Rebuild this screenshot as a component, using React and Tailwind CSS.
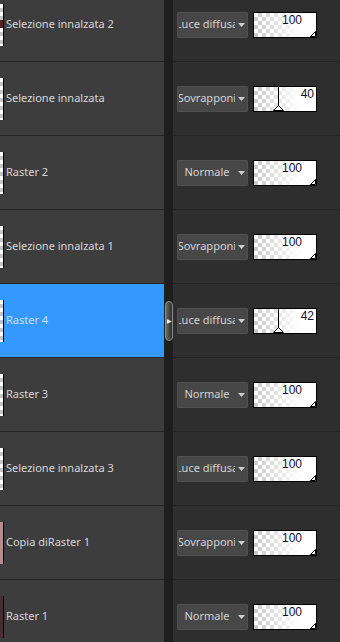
import React from 'react';

const layers = [
    { name: 'Selezione innalzata 2', mode: 'Luce diffusa', opacity: 100, thumb: 'bg-white', mark: 'bg-[#5a1f22]' },
    { name: 'Selezione innalzata', mode: 'Sovrapponi', opacity: 40, thumb: 'bg-white', mark: '' },
    { name: 'Raster 2', mode: 'Normale', opacity: 100, thumb: 'bg-white', mark: '' },
    { name: 'Selezione innalzata 1', mode: 'Sovrapponi', opacity: 100, thumb: 'bg-white', mark: '' },
    { name: 'Raster 4', mode: 'Luce diffusa', opacity: 42, thumb: 'bg-white', mark: '', selected: true },
    { name: 'Raster 3', mode: 'Normale', opacity: 100, thumb: 'bg-white', mark: '' },
    { name: 'Selezione innalzata 3', mode: 'Luce diffusa', opacity: 100, thumb: 'bg-white', mark: '' },
    { name: 'Copia diRaster 1', mode: 'Sovrapponi', opacity: 100, thumb: 'bg-[#b98a92]', mark: '' },
    { name: 'Raster 1', mode: 'Normale', opacity: 100, thumb: 'bg-[#4b2a31]', mark: '' },
];

function Thumb({ layer }) {
    return (
        <div className={`relative w-[4px] h-[42px] border-r border-black overflow-hidden ${layer.thumb}`}>
            {layer.thumb === 'bg-white' && (
                <div className="absolute inset-0 bg-[repeating-conic-gradient(#c4c4c4_0_25%,#ffffff_0_50%)] bg-[length:8px_8px]" />
            )}
            {layer.mark && <div className={`absolute left-0 top-[16px] w-[3px] h-[8px] ${layer.mark}`} />}
        </div>
    );
}

function Opacity({ value }) {
    const full = value === 100;
    return (
        <div className="relative w-[64px] h-[26px] border border-black bg-white overflow-hidden">
            <div className="absolute inset-0 bg-[repeating-conic-gradient(#c8c8c8_0_25%,#ffffff_0_50%)] bg-[length:8px_8px]" />
            <div className="absolute inset-0 bg-linear-to-r from-white/0 via-white/60 via-45% to-white to-75%" />
            {!full && (
                <>
                    <div className="absolute top-0 bottom-0 left-[24px] w-px bg-black" />
                    <svg className="absolute bottom-0 left-[19px]" width="11" height="6" viewBox="0 0 11 6">
                        <path d="M0.5 5.5 L5.5 0.5 L10.5 5.5 Z" fill="#fff" stroke="#000" strokeWidth="1" />
                    </svg>
                </>
            )}
            {full && (
                <svg className="absolute bottom-0 right-0" width="6" height="6" viewBox="0 0 6 6">
                    <path d="M0.5 5.5 L5.5 0.5 L5.5 5.5 Z" fill="#fff" stroke="#000" strokeWidth="1" />
                </svg>
            )}
            <span
                className={`absolute top-[1px] text-[12px] leading-[13px] text-[#101030] font-['Liberation_Sans',Arial,sans-serif] ${full ? 'right-[14px]' : 'right-[2px]'}`}
            >
                {value}
            </span>
        </div>
    );
}

function ModeSelect({ mode }) {
    return (
        <div className="flex items-center w-[71px] h-[26px] pl-[2px] rounded-[2px] bg-[#474747] shadow-[inset_0_0_0_1px_#4e4e4e]">
            <div className="flex justify-center w-[56px] overflow-hidden whitespace-nowrap text-[11px] text-[#d2d2d2]">
                <span>{mode}</span>
            </div>
            <svg className="ml-[3px]" width="7" height="4" viewBox="0 0 7 4">
                <path d="M0 0 L7 0 L3.5 4 Z" fill="#cdcdcd" />
            </svg>
        </div>
    );
}

export default function App() {
    return (
        <div className="w-[340px] h-[642px] overflow-hidden bg-[#2e2e2e] font-['Noto_Sans','Open_Sans',sans-serif]">
            <div className="-mt-[12px]">
                {layers.map((layer) => (
                    <div key={layer.name} className="flex h-[74px]">
                        {/* Layer name */}
                        <div
                            className={`flex items-center w-[164px] border-b border-[#262626] ${
                                layer.selected ? 'bg-[#3399ff]' : 'bg-[#3d3d3d]'
                            }`}
                        >
                            <Thumb layer={layer} />
                            <span
                                className={`ml-[2px] text-[11px] whitespace-nowrap ${
                                    layer.selected ? 'text-[#cfdcea]' : 'text-[#d6d6d6]'
                                }`}
                            >
                                {layer.name}
                            </span>
                        </div>

                        {/* Splitter */}
                        <div className="relative flex items-center w-[9px] bg-[#1e1e1e]">
                            {layer.selected && (
                                <div className="absolute left-[1px] flex items-center justify-center w-[8px] h-[40px] rounded-full border border-[#8c8c8c] bg-linear-to-r from-[#6a6a6a] to-[#2c2c2c]">
                                    <span className="text-[6px] leading-none text-white">▶</span>
                                </div>
                            )}
                        </div>

                        {/* Blend + opacity */}
                        <div className="flex flex-1 items-center gap-[5px] pl-[4px] border-b border-[#242424]">
                            <ModeSelect mode={layer.mode} />
                            <Opacity value={layer.opacity} />
                        </div>
                    </div>
                ))}
            </div>
        </div>
    );
}
